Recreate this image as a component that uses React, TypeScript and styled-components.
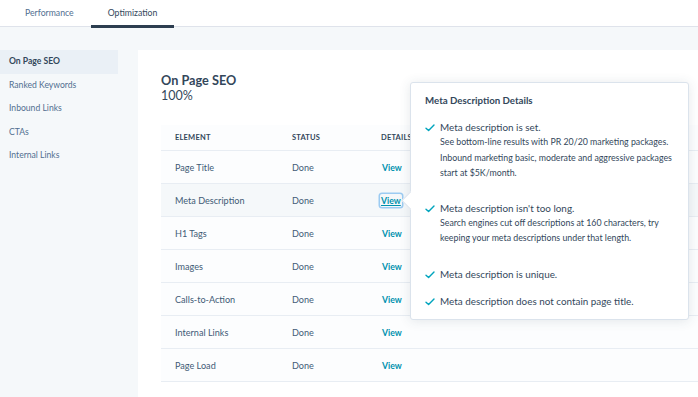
import React from 'react';
import styled, { createGlobalStyle, css } from 'styled-components';

const Colors = {
  Text: '#33475b',
  Muted: '#516f90',
  Link: '#0091ae',
  Teal: '#00a4bd',
  Border: '#dfe3eb',
  Page: '#f5f8fa',
  Active: '#eaf0f6',
  Navy: '#2d3e50',
};

const GlobalStyle = createGlobalStyle`
  html, body {
    margin: 0;
    padding: 0;
    background: ${Colors.Page};
    font-family: Lato, "Open Sans", sans-serif;
    color: ${Colors.Text};
    overflow: hidden;
  }
`;

const Page = styled.div`
  width: 698px;
  height: 397px;
  display: flex;
  flex-direction: column;
  overflow: hidden;
`;

const TabBar = styled.div`
  display: flex;
  height: 26px;
  background: #fff;
  border-bottom: 1px solid ${Colors.Border};
  padding-left: 8px;
`;

const Tab = styled.div<{ active?: boolean }>`
  display: flex;
  align-items: center;
  justify-content: center;
  padding: 0 17px;
  font-size: 8.7px;
  color: ${Colors.Muted};
  box-sizing: border-box;
  border-bottom: 3px solid transparent;
  margin-bottom: -2px;
  ${(p) =>
    p.active &&
    css`
      color: ${Colors.Text};
      border-bottom-color: ${Colors.Navy};
    `};
`;

const Body = styled.div`
  flex: 1;
  display: flex;
  gap: 20px;
  padding-top: 23px;
`;

const SideNav = styled.ul`
  width: 118px;
  margin: 0;
  padding: 0;
  list-style: none;
`;

const NavItem = styled.li<{ active?: boolean }>`
  height: 23.5px;
  line-height: 23.5px;
  padding-left: 9px;
  font-size: 8.6px;
  color: ${Colors.Muted};
  ${(p) =>
    p.active &&
    css`
      background: ${Colors.Active};
      color: ${Colors.Text};
      font-weight: 700;
    `};
`;

const Panel = styled.div`
  flex: 1;
  position: relative;
  background: #fff;
  padding: 23px 0 0 23px;
`;

const Heading = styled.h2`
  margin: 0;
  font-size: 12.7px;
  font-weight: 700;
  line-height: 15px;
`;

const Score = styled.div`
  font-size: 12.5px;
  line-height: 15px;
`;

const Table = styled.div`
  margin-top: 22px;
  background: #fcfdfe;
`;

const Row = styled.div<{ header?: boolean; hover?: boolean }>`
  display: grid;
  grid-template-columns: 117px 89px 1fr;
  align-items: center;
  height: 32px;
  padding-left: 14px;
  border-bottom: 1px solid #e8edf3;
  font-size: 9.1px;
  color: #425b76;
  ${(p) =>
    p.header &&
    css`
      height: 25px;
      font-size: 7.5px;
      font-weight: 700;
      text-transform: uppercase;
      letter-spacing: 0.2px;
      color: ${Colors.Text};
    `};
  ${(p) =>
    p.hover &&
    css`
      background: ${Colors.Page};
    `};
`;

const ViewLink = styled.a<{ focused?: boolean }>`
  justify-self: start;
  font-size: 8.7px;
  font-weight: 700;
  color: ${Colors.Link};
  text-decoration: none;
  padding: 1px 1px;
  ${(p) =>
    p.focused &&
    css`
      text-decoration: underline;
      border-radius: 2px;
      box-shadow: 0 0 0 1.5px #9ccbf2;
      margin-left: -1px;
    `};
`;

const Popover = styled.div`
  position: absolute;
  left: 272px;
  top: 32px;
  width: 279px;
  height: 238px;
  box-sizing: border-box;
  background: #fff;
  border: 1px solid #dbe3ec;
  border-radius: 3px;
  box-shadow: 0 1px 12px rgba(45, 62, 80, 0.12);
  padding: 11px 14px 0 14px;

  &::before {
    content: '';
    position: absolute;
    left: -7px;
    top: 111px;
    width: 12px;
    height: 12px;
    background: #fff;
    border-left: 1px solid #dbe3ec;
    border-bottom: 1px solid #dbe3ec;
    transform: rotate(45deg);
  }
`;

const PopTitle = styled.div`
  font-size: 9.7px;
  font-weight: 700;
  color: ${Colors.Text};
  line-height: 13px;
  margin-bottom: 13px;
`;

const Check = styled.div<{ gap: number }>`
  display: grid;
  grid-template-columns: 15px 1fr;
  margin-bottom: ${(p) => p.gap}px;
`;

const CheckIcon = styled.svg`
  margin-top: 4px;
`;

const CheckTitle = styled.div`
  font-size: 9.9px;
  line-height: 14px;
  color: ${Colors.Text};
  white-space: nowrap;
`;

const CheckNote = styled.div`
  font-size: 8.8px;
  line-height: 14.5px;
  color: ${Colors.Text};
  white-space: nowrap;
  margin-top: 1px;
`;

const rows = [
  'Page Title',
  'Meta Description',
  'H1 Tags',
  'Images',
  'Calls-to-Action',
  'Internal Links',
  'Page Load',
];

const checks = [
  {
    title: 'Meta description is set.',
    note: [
      'See bottom-line results with PR 20/20 marketing packages.',
      'Inbound marketing basic, moderate and aggressive packages',
      'start at $5K/month.',
    ],
    gap: 20,
  },
  {
    title: "Meta description isn't too long.",
    note: [
      'Search engines cut off descriptions at 160 characters, try',
      'keeping your meta descriptions under that length.',
    ],
    gap: 21,
  },
  { title: 'Meta description is unique.', gap: 13 },
  { title: 'Meta description does not contain page title.', gap: 0 },
];

function Tick() {
  return (
    <CheckIcon width="10" height="8" viewBox="0 0 10 8">
      <polyline
        points="1,4.2 3.6,6.6 9,1"
        fill="none"
        stroke={Colors.Teal}
        strokeWidth="1.4"
        strokeLinecap="round"
        strokeLinejoin="round"
      />
    </CheckIcon>
  );
}

export default function App() {
  return (
    <Page>
      <GlobalStyle />
      <TabBar>
        <Tab>Performance</Tab>
        <Tab active>Optimization</Tab>
      </TabBar>
      <Body>
        <SideNav>
          <NavItem active>On Page SEO</NavItem>
          <NavItem>Ranked Keywords</NavItem>
          <NavItem>Inbound Links</NavItem>
          <NavItem>CTAs</NavItem>
          <NavItem>Internal Links</NavItem>
        </SideNav>
        <Panel>
          <Heading>On Page SEO</Heading>
          <Score>100%</Score>
          <Table>
            <Row header>
              <span>Element</span>
              <span>Status</span>
              <span>Details</span>
            </Row>
            {rows.map((name, i) => (
              <Row key={name} hover={i === 1}>
                <span>{name}</span>
                <span>Done</span>
                <ViewLink focused={i === 1}>View</ViewLink>
              </Row>
            ))}
          </Table>
          <Popover>
            <PopTitle>Meta Description Details</PopTitle>
            {checks.map((c) => (
              <Check key={c.title} gap={c.gap}>
                <Tick />
                <div>
                  <CheckTitle>{c.title}</CheckTitle>
                  {c.note && c.note.map((line) => <CheckNote key={line}>{line}</CheckNote>)}
                </div>
              </Check>
            ))}
          </Popover>
        </Panel>
      </Body>
    </Page>
  );
}
